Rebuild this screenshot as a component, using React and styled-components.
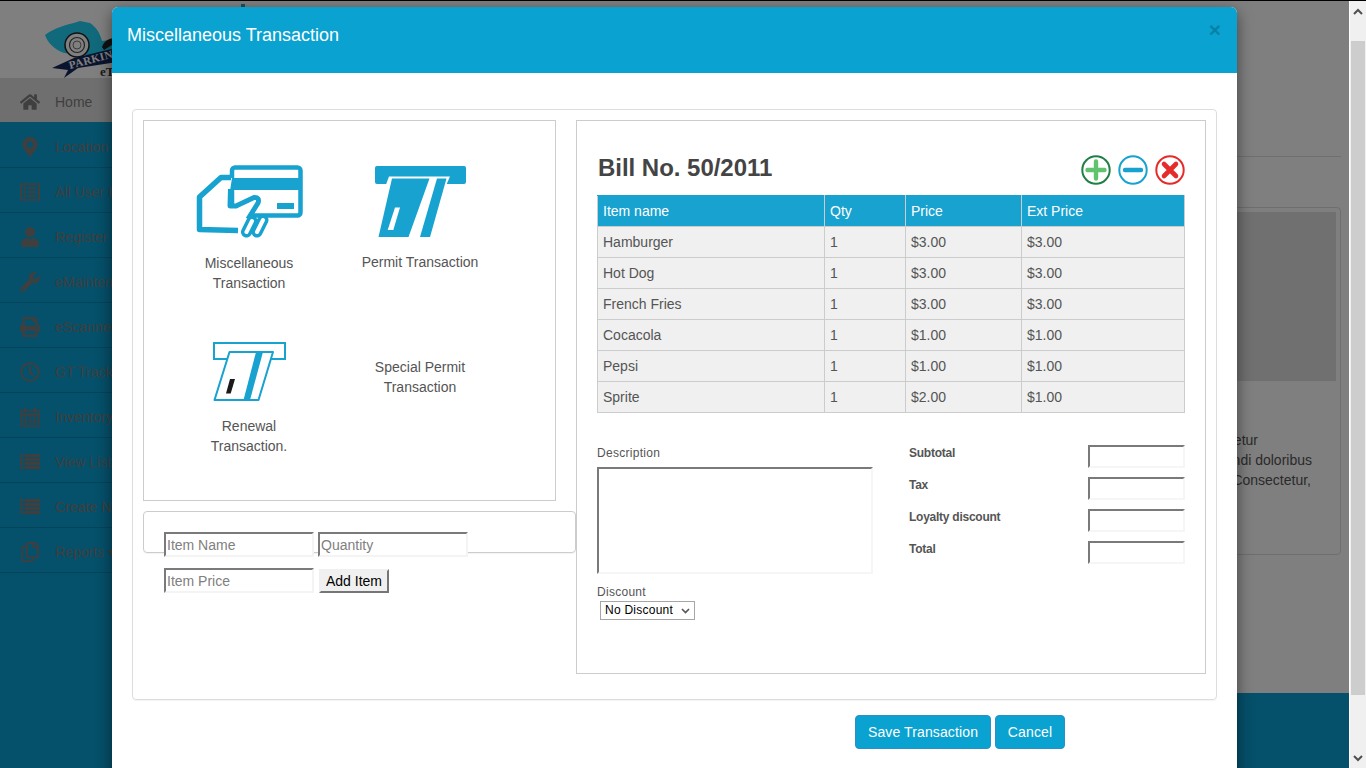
import styled, { createGlobalStyle } from 'styled-components';
import {
  FaHome,
  FaMapMarkerAlt,
  FaRegListAlt,
  FaUser,
  FaWrench,
  FaPrint,
  FaRegClock,
  FaRegCopy,
} from 'react-icons/fa';

const GlobalStyle = createGlobalStyle`
  html, body {
    margin: 0;
    height: 100%;
    overflow: hidden;
    background: #fff;
    font-family: "Liberation Sans", Arial, sans-serif;
    font-size: 14px;
    color: #555;
  }
  * { box-sizing: border-box; }
`;

function CalendarGlyph() {
  return (
    <svg width="20" height="20" viewBox="0 0 20 20" fill="none" stroke="currentColor">
      <rect x="1" y="3.5" width="18" height="16" strokeWidth="1.4" />
      <path d="M1 7.5 H19" strokeWidth="2.4" />
      <path d="M1 11 H19 M1 14 H19 M1 17 H19 M5.5 8 V19 M10 8 V19 M14.5 8 V19" strokeWidth="1" />
      <path d="M5 0.5 V5 M15 0.5 V5" strokeWidth="2.4" />
    </svg>
  );
}

function ListGlyph() {
  return (
    <svg width="20" height="16" viewBox="0 0 20 16" fill="currentColor">
      {[0, 4, 8, 12].map(y => (
        <g key={y}>
          <rect x="0" y={y} width="3" height="3.2" />
          <rect x="4.5" y={y} width="15.5" height="3.2" />
        </g>
      ))}
    </svg>
  );
}

const menu = [
  { label: 'Home', icon: FaHome, active: true },
  { label: 'Location', icon: FaMapMarkerAlt },
  { label: 'All User List', icon: FaRegListAlt },
  { label: 'Register', icon: FaUser },
  { label: 'eMaintenance', icon: FaWrench },
  { label: 'eScanner', icon: FaPrint },
  { label: 'GT Tracking', icon: FaRegClock },
  { label: 'Inventory', icon: CalendarGlyph },
  { label: 'View List', icon: ListGlyph },
  { label: 'Create New', icon: ListGlyph },
  { label: 'Reports ▾', icon: FaRegCopy },
];

const billRows = [
  ['Hamburger', '1', '$3.00', '$3.00'],
  ['Hot Dog', '1', '$3.00', '$3.00'],
  ['French Fries', '1', '$3.00', '$3.00'],
  ['Cocacola', '1', '$1.00', '$1.00'],
  ['Pepsi', '1', '$1.00', '$1.00'],
  ['Sprite', '1', '$2.00', '$1.00'],
];

const totals = ['Subtotal', 'Tax', 'Loyalty discount', 'Total'];

function ParkingLogo() {
  return (
    <svg width="80" height="77" viewBox="0 0 80 77">
      <path
        d="M1 34 C10 27 22 24 33 21 L36 20 L46 22 C52 26 56 32 58 40 L72 38 L80 46 L58 56 L20 52 C10 48 4 42 1 34 Z"
        fill="#20d4f8"
      />
      <path d="M58 46 C60 40 65 37 72 37 L68 44 L60 49 Z" fill="#222" />
      <circle cx="33" cy="44" r="12" fill="#fff" stroke="#222" strokeWidth="1.5" />
      <circle cx="33" cy="44" r="7.5" fill="none" stroke="#444" strokeWidth="1.2" />
      <circle cx="33" cy="44" r="4" fill="none" stroke="#777" strokeWidth="1" />
      <path d="M8 67 L30 57 L80 45 L80 60 L34 67 L20 77 L24 69 Z" fill="#14285c" />
      <Ribbon x="26" y="68" transform="rotate(-15 26 68)">
        PARKING
      </Ribbon>
      <LogoSub x="56" y="75">
        eTicket
      </LogoSub>
    </svg>
  );
}

function MiscIcon() {
  return (
    <svg width="107" height="73" viewBox="0 0 107 73" fill="none">
      <rect x="36" y="2.5" width="68.5" height="48" rx="3" stroke="#17a2d0" strokeWidth="4.5" />
      <rect x="36" y="13" width="69" height="12" fill="#17a2d0" />
      <rect x="81" y="38" width="17" height="6" fill="#17a2d0" />
      <path
        d="M36 13 L25 13 L3 32 L3 65 L46 67 L56 52 L64 35 Q60 30 56 33 L40 41 L34 41 L34 26 Z"
        fill="#fff"
      />
      <path
        d="M35 12.5 L25 12.5 L3.5 32 L3.5 64.5 L42 65.5"
        stroke="#17a2d0"
        strokeWidth="5.5"
        strokeLinejoin="round"
      />
      <path
        d="M34.5 24 L34 41 L40 41 L58 32.5 Q64 32 62 38 L52 54"
        stroke="#17a2d0"
        strokeWidth="5"
        strokeLinejoin="round"
      />
      <path d="M56 56 L50.5 67 M67 55 L61 67" stroke="#17a2d0" strokeWidth="11" strokeLinecap="round" />
      <path d="M56 56 L50.5 67 M67 55 L61 67" stroke="#fff" strokeWidth="4" strokeLinecap="round" />
    </svg>
  );
}

function PermitIcon() {
  return (
    <svg width="91" height="73" viewBox="0 0 91 73">
      <rect x="0" y="1" width="91" height="18" rx="2" fill="#17a2d0" />
      <path d="M14 11.5 L75 11.5 L69 25 L9 25 Z" fill="#fff" />
      <path d="M17 13.5 L54.5 13.5 L33.5 72 L3.5 72 Z" fill="#17a2d0" strokeLinejoin="round" />
      <path d="M62 13.5 L71.5 13.5 L55 72 L45 72 Z" fill="#17a2d0" />
      <path d="M20 42.5 L25 42.5 L18.3 65 L12.7 65 Z" fill="#fff" />
    </svg>
  );
}

function RenewalIcon() {
  return (
    <svg width="73" height="61" viewBox="0 0 73 61">
      <rect x="1" y="1" width="71" height="16" fill="#fff" stroke="#17a2d0" strokeWidth="2" />
      <path
        d="M16.5 10 L60 10 L45.5 58 L1.5 58 Z"
        fill="#fff"
        stroke="#17a2d0"
        strokeWidth="2"
        strokeLinejoin="round"
      />
      <path d="M43 10 L50 10 L37 58 L30.5 58 Z" fill="#17a2d0" />
      <path d="M17 37 L22 37 L17.7 51.5 L13 51.5 Z" fill="#1a1a1a" />
    </svg>
  );
}

function RoundAction({ ring, mark, kind }) {
  return (
    <svg width="30" height="30" viewBox="0 0 30 30" fill="none">
      <circle cx="15" cy="15" r="13.7" stroke={ring} strokeWidth="2" />
      {kind === 'add' && (
        <path d="M15 6.5 V23.5 M6.5 15 H23.5" stroke={mark} strokeWidth="4.4" strokeLinecap="round" />
      )}
      {kind === 'minus' && (
        <path d="M7 15 H23" stroke={mark} strokeWidth="4.4" strokeLinecap="round" />
      )}
      {kind === 'remove' && (
        <path d="M9 9 L21 21 M21 9 L9 21" stroke={mark} strokeWidth="4.6" strokeLinecap="round" />
      )}
    </svg>
  );
}

export default function App() {
  return (
    <>
      <GlobalStyle />
      <Screen>
        <Viewport>
          <Page>
            <PageHeader>
              <ParkingLogo />
              <HeaderMark />
            </PageHeader>
            <PageBody>
              <Sidebar>
                {menu.map(item => (
                  <MenuItem key={item.label} $active={item.active}>
                    <MenuIcon>
                      <item.icon />
                    </MenuIcon>
                    {item.label}
                  </MenuItem>
                ))}
              </Sidebar>
              <MainColumn>
                <MainContent>
                  <PageRule />
                  <Thumbnail>
                    <ThumbImage />
                    <CaptionLine $inset={78}>Lorem ipsum dolor sit amet, consectetur</CaptionLine>
                    <CaptionLine $inset={24}>adipisicing elit. Reiciendis blandi doloribus</CaptionLine>
                    <CaptionLine $inset={25}>quas, saepe, nulla. Consectetur,</CaptionLine>
                  </Thumbnail>
                </MainContent>
                <PageFooter />
              </MainColumn>
            </PageBody>
          </Page>

          <Overlay>
            <Modal>
              <ModalHeader>
                <ModalTitle>Miscellaneous Transaction</ModalTitle>
                <CloseButton>×</CloseButton>
              </ModalHeader>
              <ModalBody>
                <OuterPanel>
                  <LeftColumn>
                    <TileBox>
                      <Tile>
                        <MiscIcon />
                        <TileLabel $gap={15}>
                          Miscellaneous
                          <br />
                          Transaction
                        </TileLabel>
                      </Tile>
                      <Tile>
                        <PermitIcon />
                        <TileLabel $gap={14}>Permit Transaction</TileLabel>
                      </Tile>
                      <Tile>
                        <RenewalIcon />
                        <TileLabel $gap={13}>
                          Renewal
                          <br />
                          Transaction.
                        </TileLabel>
                      </Tile>
                      <Tile>
                        <TileLabel $gap={15}>
                          Special Permit
                          <br />
                          Transaction
                        </TileLabel>
                      </Tile>
                    </TileBox>
                    <ItemPanel>
                      <ItemRow>
                        <SunkenInput placeholder="Item Name" />
                        <SunkenInput placeholder="Quantity" />
                      </ItemRow>
                      <ItemRow>
                        <SunkenInput placeholder="Item Price" />
                        <AddButton>Add Item</AddButton>
                      </ItemRow>
                    </ItemPanel>
                  </LeftColumn>

                  <BillBox>
                    <BillHead>
                      <BillTitle>Bill No. 50/2011</BillTitle>
                      <BillActions>
                        <RoundAction kind="add" ring="#1f7f45" mark="#5fc46d" />
                        <RoundAction kind="minus" ring="#17a2d0" mark="#17a2d0" />
                        <RoundAction kind="remove" ring="#e62b2b" mark="#e62b2b" />
                      </BillActions>
                    </BillHead>
                    <BillTable>
                      <thead>
                        <tr>
                          <HeadCell $width={227}>Item name</HeadCell>
                          <HeadCell $width={81}>Qty</HeadCell>
                          <HeadCell $width={116}>Price</HeadCell>
                          <HeadCell $width={163}>Ext Price</HeadCell>
                        </tr>
                      </thead>
                      <tbody>
                        {billRows.map(row => (
                          <tr key={row[0]}>
                            {row.map((cell, i) => (
                              <BodyCell key={i}>{cell}</BodyCell>
                            ))}
                          </tr>
                        ))}
                      </tbody>
                    </BillTable>
                    <BillLower>
                      <NotesColumn>
                        <SmallLabel>Description</SmallLabel>
                        <NotesArea />
                        <DiscountLabel>Discount</DiscountLabel>
                        <DiscountSelect>
                          <DiscountValue>No Discount</DiscountValue>
                          <svg width="9" height="6" viewBox="0 0 9 6" fill="none">
                            <path d="M1 1 L4.5 4.5 L8 1" stroke="#555" strokeWidth="1.6" />
                          </svg>
                        </DiscountSelect>
                      </NotesColumn>
                      <TotalsGrid>
                        {totals.map(label => (
                          <TotalsRow key={label}>
                            <TotalsLabel>{label}</TotalsLabel>
                            <TotalsInput />
                          </TotalsRow>
                        ))}
                      </TotalsGrid>
                    </BillLower>
                  </BillBox>
                </OuterPanel>
              </ModalBody>
              <ModalFooter>
                <PrimaryButton $width={136}>Save Transaction</PrimaryButton>
                <PrimaryButton $width={70}>Cancel</PrimaryButton>
              </ModalFooter>
            </Modal>
          </Overlay>
        </Viewport>

        <Scrollbar>
          <ScrollEnd>
            <svg width="10" height="7" viewBox="0 0 10 7" fill="none">
              <path d="M1 6 L5 2 L9 6" stroke="#505050" strokeWidth="2" />
            </svg>
          </ScrollEnd>
          <ScrollThumb />
          <ScrollEnd>
            <svg width="10" height="7" viewBox="0 0 10 7" fill="none">
              <path d="M1 1 L5 5 L9 1" stroke="#505050" strokeWidth="2" />
            </svg>
          </ScrollEnd>
        </Scrollbar>
      </Screen>
    </>
  );
}

const Screen = styled.div`
  display: flex;
  width: 1366px;
  height: 768px;
  overflow: hidden;
  border-top: 1px solid #000;
`;

const Viewport = styled.div`
  position: relative;
  width: 1349px;
  overflow: hidden;
`;

const Page = styled.div`
  display: flex;
  flex-direction: column;
  height: 100%;
`;

const PageHeader = styled.header`
  position: relative;
  height: 77px;
  padding-left: 44px;
  background: #fff;
  overflow: hidden;
`;

const HeaderMark = styled.span`
  position: absolute;
  top: 3px;
  left: 241px;
  width: 4px;
  height: 3px;
  background: #34a0c0;
`;

const Ribbon = styled.text`
  font-family: 'Liberation Serif', serif;
  font-weight: 700;
  font-size: 11px;
  letter-spacing: 0.4px;
  fill: #fff;
`;

const LogoSub = styled.text`
  font-family: 'Liberation Serif', serif;
  font-size: 13px;
  font-weight: 700;
  fill: #333;
`;

const PageBody = styled.div`
  display: flex;
  flex: 1;
  min-height: 0;
`;

const Sidebar = styled.nav`
  width: 250px;
  background: #0aa0d4;
`;

const MenuItem = styled.div`
  display: flex;
  align-items: center;
  height: 45px;
  padding: 3px 0 0 20px;
  color: #7f7f7f;
  background: ${p => (p.$active ? '#dedede' : 'transparent')};
  border-bottom: 1px solid ${p => (p.$active ? '#0aa0d4' : '#0888b4')};
`;

const MenuIcon = styled.span`
  display: flex;
  justify-content: center;
  width: 20px;
  margin-right: 15px;
  font-size: 20px;
`;

const MainColumn = styled.div`
  display: flex;
  flex: 1;
  flex-direction: column;
`;

const MainContent = styled.main`
  flex: 1;
  padding: 78px 8px 0 20px;
  background: #fff;
`;

const PageRule = styled.div`
  height: 1px;
  margin-bottom: 50px;
  background: #dedede;
`;

const Thumbnail = styled.div`
  height: 348px;
  padding: 4px;
  border: 1px solid #ddd;
  border-radius: 4px;
`;

const ThumbImage = styled.div`
  height: 169px;
  margin-bottom: 49px;
  background: #e0e0e0;
`;

const CaptionLine = styled.div`
  margin-right: ${p => p.$inset}px;
  line-height: 20px;
  text-align: right;
  white-space: nowrap;
  color: #555;
`;

const PageFooter = styled.footer`
  height: 75px;
  background: #0aa0d4;
`;

const Overlay = styled.div`
  position: absolute;
  inset: 0;
  background: rgba(0, 0, 0, 0.5);
`;

const Modal = styled.div`
  position: absolute;
  top: 6px;
  left: 112px;
  width: 1125px;
  background: #fff;
  border-radius: 6px;
  box-shadow: 0 5px 15px rgba(0, 0, 0, 0.5);
`;

const ModalHeader = styled.div`
  display: flex;
  justify-content: space-between;
  height: 66px;
  padding: 15px 16px 0 15px;
  background: #0aa2d0;
  border-radius: 6px 6px 0 0;
`;

const ModalTitle = styled.h4`
  margin: 0;
  font-size: 18px;
  font-weight: 400;
  line-height: 26px;
  color: #fff;
`;

const CloseButton = styled.span`
  margin-top: -5px;
  font-size: 21px;
  font-weight: 700;
  line-height: 26px;
  color: #000;
  opacity: 0.2;
`;

const ModalBody = styled.div`
  padding: 36px 20px 0;
`;

const OuterPanel = styled.div`
  display: grid;
  grid-template-columns: 433px 630px;
  height: 591px;
  padding: 10px;
  border: 1px solid #ddd;
  border-radius: 4px;
  box-shadow: 0 1px 1px rgba(0, 0, 0, 0.05);
`;

const LeftColumn = styled.div`
  display: flex;
  flex-direction: column;
`;

const TileBox = styled.div`
  display: grid;
  grid-template-columns: 170px 172px;
  grid-template-rows: 128px auto;
  row-gap: 49px;
  width: 413px;
  height: 381px;
  padding: 44px 0 0 20px;
  border: 1px solid #ccc;
`;

const Tile = styled.div`
  display: flex;
  flex-direction: column;
  align-items: center;
  text-align: center;
`;

const TileLabel = styled.div`
  margin-top: ${p => p.$gap}px;
  line-height: 20px;
  color: #555;
`;

const ItemPanel = styled.div`
  height: 42px;
  margin-top: 10px;
  padding: 20px 20px 0;
  border: 1px solid #ccc;
  border-radius: 4px;
  box-shadow: 0 1px 1px rgba(0, 0, 0, 0.05);
`;

const ItemRow = styled.div`
  display: flex;
  align-items: center;
  gap: 4px;
  margin-bottom: 11px;
`;

const SunkenInput = styled.input`
  width: 150px;
  height: 25px;
  padding: 1px;
  font-family: inherit;
  font-size: 14px;
  background: #fff;
  border: 2px solid;
  border-color: #7a7a7a #f4f4f4 #f4f4f4 #7a7a7a;
  outline: none;

  &::placeholder {
    color: #808080;
    opacity: 1;
  }
`;

const AddButton = styled.button`
  width: 70px;
  height: 24px;
  margin-left: 1px;
  padding: 0;
  font-family: inherit;
  font-size: 14px;
  color: #000;
  background: #f0f0f0;
  border: 2px solid;
  border-color: #f0f0f0 #767676 #767676 #f0f0f0;
`;

const BillBox = styled.section`
  height: 554px;
  padding: 34px 20px 0;
  border: 1px solid #ccc;
`;

const BillHead = styled.div`
  display: flex;
  justify-content: space-between;
  align-items: center;
  height: 30px;
  margin-bottom: 10px;
  padding-left: 1px;
`;

const BillTitle = styled.h3`
  margin: -4px 0 0;
  font-size: 24px;
  font-weight: 700;
  letter-spacing: -0.03px;
  color: #444;
`;

const BillActions = styled.div`
  display: flex;
  gap: 7px;
`;

const BillTable = styled.table`
  width: 587px;
  border-collapse: collapse;
  table-layout: fixed;
`;

const HeadCell = styled.th`
  width: ${p => p.$width}px;
  height: 31px;
  padding: 0 5px;
  font-weight: 400;
  text-align: left;
  color: #fff;
  background: #17a2d0;
  border: 1px solid #ccc;
  border-top-color: #17a2d0;
`;

const BodyCell = styled.td`
  height: 31px;
  padding: 0 5px;
  color: #555;
  background: #f0f0f0;
  border: 1px solid #ccc;
`;

const BillLower = styled.div`
  display: flex;
  justify-content: space-between;
  margin-top: 32px;
`;

const NotesColumn = styled.div`
  width: 276px;
`;

const SmallLabel = styled.div`
  padding-top: 1px;
  font-size: 12px;
  line-height: 14px;
  letter-spacing: 0.28px;
  color: #555;
`;

const NotesArea = styled.textarea`
  display: block;
  width: 276px;
  height: 107px;
  margin-top: 7px;
  background: #fff;
  border: 2px solid;
  border-color: #7a7a7a #f6f6f6 #f6f6f6 #7a7a7a;
  outline: none;
  resize: none;
`;

const DiscountLabel = styled(SmallLabel)`
  margin-top: 10px;
`;

const DiscountSelect = styled.div`
  display: flex;
  justify-content: space-between;
  align-items: center;
  width: 95px;
  height: 19px;
  margin: 2px 0 0 3px;
  padding: 0 4px;
  background: #fff;
  border: 1px solid #a6a6a6;
`;

const DiscountValue = styled.span`
  margin-top: -2px;
  font-size: 12px;
  letter-spacing: 0.25px;
  color: #000;
`;

const TotalsGrid = styled.div`
  display: flex;
  flex-direction: column;
  gap: 9px;
  width: 276px;
`;

const TotalsRow = styled.div`
  display: flex;
  justify-content: space-between;
  align-items: flex-start;
`;

const TotalsLabel = styled.div`
  margin-top: 1px;
  font-size: 12px;
  font-weight: 700;
  line-height: 14px;
  letter-spacing: -0.25px;
  color: #555;
`;

const TotalsInput = styled.input`
  width: 97px;
  height: 23px;
  background: #fff;
  border: 2px solid;
  border-color: #7a7a7a #f6f6f6 #f6f6f6 #7a7a7a;
  outline: none;
`;

const ModalFooter = styled.div`
  display: flex;
  gap: 4px;
  padding: 15px 0 40px 743px;
`;

const PrimaryButton = styled.button`
  width: ${p => p.$width}px;
  height: 34px;
  padding: 0;
  font-family: inherit;
  font-size: 14px;
  letter-spacing: 0.12px;
  color: #fff;
  background: #0aa2d0;
  border: 1px solid #2e8fc4;
  border-radius: 4px;
`;

const Scrollbar = styled.div`
  display: flex;
  flex-direction: column;
  width: 17px;
  padding-left: 1px;
  background: #f0f0f0;
  border-left: 1px solid #fff;
`;

const ScrollEnd = styled.div`
  display: flex;
  justify-content: center;
  align-items: center;
  height: 20px;
  padding-right: 1px;
`;

const ScrollThumb = styled.div`
  flex: 1;
  margin: 20px 1px 53px 0;
  background: #cdcdcd;
`;
